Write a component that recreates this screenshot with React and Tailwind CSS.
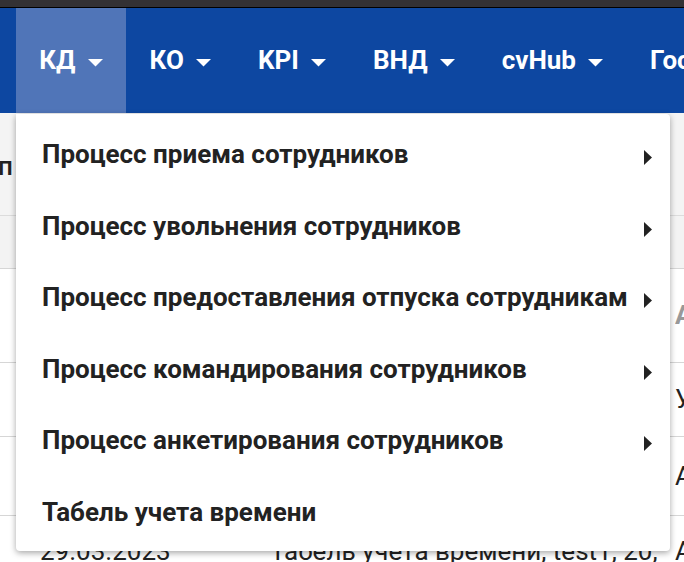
import React from 'react';

const navItems = [
  { label: 'КД', active: true },
  { label: 'КО' },
  { label: 'KPI' },
  { label: 'ВНД' },
  { label: 'cvHub' },
  { label: 'Гос', noCaret: true },
];

const menuItems = [
  { label: 'Процесс приема сотрудников', sub: true },
  { label: 'Процесс увольнения сотрудников', sub: true },
  { label: 'Процесс предоставления отпуска сотрудникам', sub: true },
  { label: 'Процесс командирования сотрудников', sub: true },
  { label: 'Процесс анкетирования сотрудников', sub: true },
  { label: 'Табель учета времени' },
];

function Caret() {
  return (
    <svg width="15" height="8" viewBox="0 0 15 8" className="ml-[12.5px] mt-[4px] shrink-0">
      <path d="M0 0 L15 0 L7.5 7.5 Z" fill="#fff" />
    </svg>
  );
}

function SubArrow() {
  return (
    <svg width="8" height="15" viewBox="0 0 8 15" className="mt-[6px] shrink-0">
      <path d="M0 0 L8 7.5 L0 15 Z" fill="#222" />
    </svg>
  );
}

export default function App() {
  return (
    <div className="relative w-[684px] h-[562px] overflow-hidden bg-white font-['Roboto',sans-serif]">
      {/* Window top edge */}
      <div className="h-[8px] bg-[#333134] border-b border-black" />

      {/* Navbar */}
      <nav className="h-[105px] bg-[#0d47a1] flex pl-[16px] whitespace-nowrap">
        {navItems.map((item) => (
          <div
            key={item.label}
            className={`flex items-center px-[23.3px] text-white font-bold text-[26px] ${item.active ? 'bg-[#5075b8]' : ''}`}
          >
            <span>{item.label}</span>
            {!item.noCaret && <Caret />}
          </div>
        ))}
      </nav>

      {/* Page content behind the menu */}
      <div className="text-[#222] text-[26px] whitespace-nowrap">
        <div className="h-[103px] bg-[#f4f4f4] flex items-start pt-[34px] border-b border-[#dcdcdc]">
          <span className="-ml-[2px] font-medium">п</span>
        </div>
        <div className="h-[53px] bg-[#f3f3f3] border-b border-[#d6d6d6]" />
        <div className="h-[94px] border-b border-[#d6d6d6] flex items-center justify-end">
          <span className="text-[#999] font-bold w-[9px] overflow-hidden">А</span>
        </div>
        <div className="h-[74px] border-b border-[#d6d6d6] flex items-center justify-end">
          <span className="w-[9px] overflow-hidden">У</span>
        </div>
        <div className="h-[79px] border-b border-[#d6d6d6] flex items-center justify-end">
          <span className="w-[9px] overflow-hidden">А</span>
        </div>
        <div className="h-[60px] flex items-start pt-[16px]">
          <span className="ml-[40px] w-[230px]">29.03.2023</span>
          <span className="flex-1 overflow-hidden">Табель учета времени, test1, 20,</span>
          <span className="w-[9px] overflow-hidden">А</span>
        </div>
      </div>

      {/* Dropdown menu */}
      <div className="absolute left-[16px] top-[114px] w-[654px] bg-white rounded-b-[4px] rounded-tr-[4px] shadow-[0_2px_6px_rgba(0,0,0,0.35)] pt-[5px] pb-[3px]">
        {menuItems.map((item) => (
          <div
            key={item.label}
            className="h-[71.5px] flex items-center justify-between pl-[26px] pr-[18px] text-[26px] font-bold text-[#222] whitespace-nowrap"
          >
            <span>{item.label}</span>
            {item.sub && <SubArrow />}
          </div>
        ))}
      </div>
    </div>
  );
}
